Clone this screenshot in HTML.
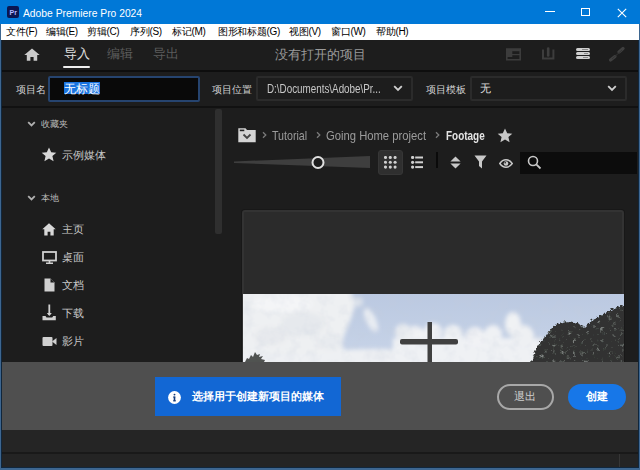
<!DOCTYPE html>
<html><head><meta charset="utf-8">
<style>
*{box-sizing:border-box;margin:0;padding:0}
html,body{width:640px;height:470px;overflow:hidden;background:#1d1d1d;font-family:"Liberation Sans",sans-serif}
.a{position:absolute}
.t{position:absolute;white-space:nowrap;line-height:1}
.sx{transform-origin:0 50%;transform:scaleX(0.82)}
.mn{font-size:10px;color:#000;top:27px;letter-spacing:-0.3px}
</style></head><body>

<!-- title bar -->
<div class="a" style="left:0;top:0;width:640px;height:24px;background:#0078d7"></div>
<div class="a" style="left:7px;top:6px;width:12px;height:12px;background:#0b1650;border-radius:2px"></div>
<div class="t" style="left:9.5px;top:8.5px;font-size:7px;color:#b4b8ff;font-weight:bold">Pr</div>
<div class="t" style="left:23px;top:8.5px;font-size:10.3px;color:#fff">Adobe Premiere Pro 2024</div>
<div class="a" style="left:545px;top:11px;width:10px;height:1px;background:#fff"></div>
<div class="a" style="left:581px;top:8px;width:8.5px;height:8px;border:1px solid #fff"></div>
<svg class="a" style="left:616.5px;top:7.5px" width="10" height="10" viewBox="0 0 10 10"><path d="M0.8 0.8L9.2 9.2M9.2 0.8L0.8 9.2" stroke="#fff" stroke-width="1.1"/></svg>

<!-- menu bar -->
<div class="a" style="left:1px;top:24px;width:638px;height:16px;background:#fff"></div>
<div class="t mn" style="left:6px">文件(F)</div>
<div class="t mn" style="left:46px">编辑(E)</div>
<div class="t mn" style="left:87px">剪辑(C)</div>
<div class="t mn" style="left:130px">序列(S)</div>
<div class="t mn" style="left:172px">标记(M)</div>
<div class="t mn" style="left:218px">图形和标题(G)</div>
<div class="t mn" style="left:289px">视图(V)</div>
<div class="t mn" style="left:331px">窗口(W)</div>
<div class="t mn" style="left:376px">帮助(H)</div>

<!-- header -->
<div class="a" style="left:1px;top:40px;width:638px;height:30px;background:#1d1d1d"></div>
<div class="a" style="left:1px;top:70px;width:638px;height:2px;background:#0e0e0e"></div>
<svg class="a" style="left:24px;top:47.5px" width="16" height="13" viewBox="0 0 16 13"><path d="M8 0.4L0.3 7H2.8V12.8H6.4V9H9.6V12.8H13.2V7H15.7Z" fill="#cacaca"/></svg>
<div class="t" style="left:64px;top:47px;font-size:13px;color:#e0e0e0">导入</div>
<div class="a" style="left:63px;top:66px;width:27px;height:2px;background:#eee;border-radius:1px"></div>
<div class="t" style="left:107px;top:47px;font-size:13px;color:#5c5c5c">编辑</div>
<div class="t" style="left:153px;top:47px;font-size:13px;color:#5c5c5c">导出</div>
<div class="t" style="left:275px;top:48.5px;font-size:12.5px;color:#9a9a9a">没有打开的项目</div>
<!-- header right icons -->
<svg class="a" style="left:506px;top:48px" width="16" height="13" viewBox="0 0 16 13" fill="#3c3c3c"><path d="M0.8 1H14.2V11.8H0.8Z" fill="none" stroke="#3c3c3c" stroke-width="1.6"/><rect x="0.8" y="1" width="13.4" height="2.2"/><rect x="0.8" y="1" width="5.5" height="8"/><rect x="6" y="6" width="8" height="1.2"/></svg>
<svg class="a" style="left:541px;top:47px" width="15" height="14" viewBox="0 0 15 14"><path d="M2 2.5V11.5H12.4V2.5" fill="none" stroke="#3d3d3d" stroke-width="2"/><path d="M7.2 1.5V8.5" stroke="#3f3f3f" stroke-width="2.6" stroke-linecap="round"/></svg>
<div class="a" style="left:576px;top:48px;width:14px;height:3px;background:#d0d0d0;border-radius:1.5px"></div><div class="a" style="left:582px;top:49px;width:6px;height:1px;background:#8a8a8a"></div>
<div class="a" style="left:576px;top:52px;width:14px;height:3px;background:#d0d0d0;border-radius:1.5px"></div><div class="a" style="left:584px;top:53px;width:4px;height:1px;background:#8a8a8a"></div>
<div class="a" style="left:576px;top:56px;width:14px;height:3px;background:#d0d0d0;border-radius:1.5px"></div><div class="a" style="left:583px;top:57px;width:5px;height:1px;background:#8a8a8a"></div>
<svg class="a" style="left:608px;top:46px" width="17" height="17" viewBox="0 0 17 17"><path d="M11 6L15 2.5" stroke="#3f3f3f" stroke-width="3.2" stroke-linecap="round"/><path d="M2.5 14L7 10.5" stroke="#3f3f3f" stroke-width="3.2" stroke-linecap="round"/><path d="M4 13L14 4" stroke="#333" stroke-width="1"/></svg>

<!-- project row -->
<div class="a" style="left:1px;top:72px;width:638px;height:34px;background:#1d1d1d"></div>
<div class="t" style="left:15.5px;top:84.5px;font-size:9.7px;color:#d4d4d4">项目名</div>
<div class="a" style="left:48px;top:76px;width:152px;height:26px;background:#090909;border:2.5px solid #26446f;border-radius:2px"></div>
<div class="a" style="left:64px;top:82px;width:36px;height:12px;background:#1a73e0"></div>
<div class="t" style="left:64px;top:82.5px;font-size:12px;color:#fff">无标题</div>
<div class="t" style="left:212px;top:84.5px;font-size:9.5px;color:#d4d4d4">项目位置</div>
<div class="a" style="left:256px;top:76px;width:157px;height:25px;background:#1d1d1d;border:2px solid #2b2b2b;border-radius:2px"></div>
<div class="t sx" style="left:267px;top:83px;font-size:12px;color:#c8c8c8">D:\Documents\Adobe\Pr...</div>
<svg class="a" style="left:393px;top:85px" width="10" height="7" viewBox="0 0 10 7"><path d="M1.2 1.2L5 5L8.8 1.2" fill="none" stroke="#d0d0d0" stroke-width="1.8"/></svg>
<div class="t" style="left:425.5px;top:84.5px;font-size:9.7px;color:#d4d4d4">项目模板</div>
<div class="a" style="left:470px;top:76px;width:157px;height:25px;background:#1d1d1d;border:2px solid #2b2b2b;border-radius:2px"></div>
<div class="t" style="left:480px;top:83px;font-size:11px;color:#dcdcdc">无</div>
<svg class="a" style="left:607px;top:85px" width="10" height="7" viewBox="0 0 10 7"><path d="M1.2 1.2L5 5L8.8 1.2" fill="none" stroke="#d0d0d0" stroke-width="1.8"/></svg>
<div class="a" style="left:1px;top:106px;width:638px;height:2px;background:#111"></div>

<!-- left panel -->
<svg class="a" style="left:27px;top:121px" width="9" height="6" viewBox="0 0 9 6"><path d="M1.2 1.2L4.5 4.5L7.8 1.2" fill="none" stroke="#b0b0b0" stroke-width="1.8"/></svg>
<div class="t" style="left:41px;top:119.5px;font-size:9px;color:#bdbdbd">收藏夹</div>
<svg class="a" style="left:41px;top:147px" width="16" height="15" viewBox="0 0 16 15"><path d="M8 0.5L10.2 5.3L15.3 5.7L11.4 9.1L12.6 14.2L8 11.5L3.4 14.2L4.6 9.1L0.7 5.7L5.8 5.3Z" fill="#d8d8d8"/></svg>
<div class="t" style="left:62px;top:149.5px;font-size:11.3px;color:#c8c8c8">示例媒体</div>
<svg class="a" style="left:27px;top:195px" width="9" height="6" viewBox="0 0 9 6"><path d="M1.2 1.2L4.5 4.5L7.8 1.2" fill="none" stroke="#b0b0b0" stroke-width="1.8"/></svg>
<div class="t" style="left:41px;top:193.5px;font-size:9px;color:#bdbdbd">本地</div>

<svg class="a" style="left:42px;top:223px" width="15" height="13" viewBox="0 0 15 13"><path d="M7 0.3L0.3 6.3H2.3V12.5H5.6V8.8H8.4V12.5H11.7V6.3H13.7Z" fill="#d8d8d8"/></svg>
<div class="t" style="left:62px;top:224px;font-size:11.3px;color:#c8c8c8">主页</div>
<svg class="a" style="left:42px;top:251px" width="15" height="13" viewBox="0 0 15 13"><rect x="1" y="1" width="13" height="8.5" fill="none" stroke="#d0d0d0" stroke-width="1.8"/><path d="M7.5 9.5V12.2M4 12.2H11" stroke="#d0d0d0" stroke-width="1.6"/></svg>
<div class="t" style="left:62px;top:252px;font-size:11.3px;color:#c8c8c8">桌面</div>
<svg class="a" style="left:44px;top:278px" width="11" height="14" viewBox="0 0 11 14"><path d="M0.5 0.5H6.5L10.5 4.5V13.5H0.5Z" fill="#d0d0d0"/><path d="M6.5 0.5V4.5H10.5" fill="#1d1d1d"/></svg>
<div class="t" style="left:62px;top:280px;font-size:11.3px;color:#c8c8c8">文档</div>
<svg class="a" style="left:42px;top:304px" width="15" height="17" viewBox="0 0 15 17"><path d="M7.3 0.5V11" stroke="#d0d0d0" stroke-width="1.8"/><path d="M4.8 9L7.3 12L9.8 9Z" fill="#d0d0d0"/><path d="M0.5 12H3.5L4.5 13.5H10.2L11.2 12H13.8V16.3H0.5Z" fill="#d0d0d0"/></svg>
<div class="t" style="left:62px;top:308px;font-size:11.3px;color:#c8c8c8">下载</div>
<svg class="a" style="left:42px;top:336px" width="15" height="11" viewBox="0 0 15 11"><rect x="0.5" y="1" width="10" height="9" rx="1" fill="#d0d0d0"/><path d="M10 5.5L14.5 2V9Z" fill="#d0d0d0"/></svg>
<div class="t" style="left:62px;top:336px;font-size:11.3px;color:#c8c8c8">影片</div>

<!-- scrollbar -->
<div class="a" style="left:215px;top:109px;width:7px;height:125px;background:#2f2f2f;border-radius:2px"></div>

<!-- breadcrumb -->
<svg class="a" style="left:238px;top:128px" width="18" height="15" viewBox="0 0 18 15"><path d="M0.3 0.3H7.5L9 2H17.7V14.3H0.3Z" fill="#d4d4d4"/><rect x="1.8" y="1.6" width="4.5" height="1.6" fill="#222"/><path d="M5.5 6.5L9 10L12.5 6.5" fill="none" stroke="#444" stroke-width="1.8"/></svg>
<svg class="a" style="left:262px;top:131px" width="5" height="8" viewBox="0 0 5 8"><path d="M1 1.2L3.8 4L1 6.8" fill="none" stroke="#7a7a7a" stroke-width="1.3"/></svg>
<div class="t sx" style="left:272px;top:129px;font-size:13px;color:#9c9c9c">Tutorial</div>
<svg class="a" style="left:316px;top:131px" width="5" height="8" viewBox="0 0 5 8"><path d="M1 1.2L3.8 4L1 6.8" fill="none" stroke="#7a7a7a" stroke-width="1.3"/></svg>
<div class="t sx" style="left:326px;top:129px;font-size:13px;color:#9c9c9c;transform:scaleX(0.865)">Going Home project</div>
<svg class="a" style="left:435px;top:131px" width="5" height="8" viewBox="0 0 5 8"><path d="M1 1.2L3.8 4L1 6.8" fill="none" stroke="#7a7a7a" stroke-width="1.3"/></svg>
<div class="t sx" style="left:445.5px;top:129px;font-size:13px;color:#e4e4e4;font-weight:bold;transform:scaleX(0.765)">Footage</div>
<svg class="a" style="left:497px;top:128px" width="16" height="15" viewBox="0 0 16 15"><path d="M8 0.5L10.2 5.3L15.3 5.7L11.4 9.1L12.6 14.2L8 11.5L3.4 14.2L4.6 9.1L0.7 5.7L5.8 5.3Z" fill="#c8c8c8"/></svg>

<!-- toolbar -->
<svg class="a" style="left:232px;top:154px" width="140" height="16" viewBox="0 0 140 16"><path d="M2 7.5L138 2V14L2 9Z" fill="#3e3e3e"/><circle cx="86" cy="8.5" r="5.5" fill="#1d1d1d" stroke="#e0e0e0" stroke-width="2"/></svg>
<div class="a" style="left:378px;top:150px;width:25px;height:25px;background:#2f2f2f;border:1px solid #363636;border-radius:3px"></div>
<svg class="a" style="left:384px;top:156.3px" width="14" height="14" viewBox="0 0 14 14" fill="#d0d0d0"><circle cx="1.5" cy="1.5" r="1.55"/><circle cx="6.3" cy="1.5" r="1.55"/><circle cx="11.1" cy="1.5" r="1.55"/><circle cx="1.5" cy="6.3" r="1.55"/><circle cx="6.3" cy="6.3" r="1.55"/><circle cx="11.1" cy="6.3" r="1.55"/><circle cx="1.5" cy="11.1" r="1.55"/><circle cx="6.3" cy="11.1" r="1.55"/><circle cx="11.1" cy="11.1" r="1.55"/></svg>
<svg class="a" style="left:411.3px;top:156.1px" width="13" height="13" viewBox="0 0 13 13" fill="#d0d0d0"><circle cx="1.6" cy="1.5" r="1.6"/><rect x="4.2" y="0.5" width="7.8" height="2"/><circle cx="1.6" cy="6.3" r="1.6"/><rect x="4.2" y="5.3" width="7.8" height="2"/><circle cx="1.6" cy="11.1" r="1.6"/><rect x="4.2" y="10.1" width="7.8" height="2"/></svg>
<div class="a" style="left:436px;top:152px;width:2px;height:16px;background:#0a0a0a"></div>
<svg class="a" style="left:449.5px;top:156px" width="11" height="13" viewBox="0 0 11 13" fill="#c8c8c8"><path d="M5.5 0.6L10.6 5.4H0.4Z"/><path d="M5.5 12.4L10.6 7.4H0.4Z"/></svg>
<svg class="a" style="left:474px;top:155px" width="13" height="14" viewBox="0 0 13 14" fill="#c8c8c8"><path d="M0.5 0.5H12.5L8 6.5V13.5L5 11V6.5Z"/></svg>
<svg class="a" style="left:499px;top:158.5px" width="14" height="9" viewBox="0 0 14 9"><path d="M0.8 4.5C3 1.3 5 0.8 7 0.8S11 1.3 13.2 4.5C11 7.7 9 8.2 7 8.2S3 7.7 0.8 4.5Z" fill="none" stroke="#c8c8c8" stroke-width="1.5"/><circle cx="7" cy="4.5" r="2.3" fill="#c8c8c8"/><circle cx="6.2" cy="3.8" r="0.8" fill="#1d1d1d"/></svg>
<div class="a" style="left:520px;top:152px;width:117px;height:22px;background:#0c0c0c"></div>
<svg class="a" style="left:527px;top:155px" width="15" height="15" viewBox="0 0 15 15"><circle cx="6" cy="6" r="4.5" fill="none" stroke="#c8c8c8" stroke-width="1.6"/><path d="M9.3 9.3L13.5 13.5" stroke="#c8c8c8" stroke-width="1.8"/></svg>

<!-- card -->
<div class="a" style="left:242px;top:210px;width:382px;height:170px;background:#2b2b2b;border:2px solid #333;border-radius:3px;box-shadow:0 0 0 1px #181818"></div>
<svg class="a" style="left:243px;top:294px" width="381" height="68" viewBox="0 0 381 68">
<defs>
<filter id="bl" x="-30%" y="-30%" width="160%" height="160%"><feGaussianBlur stdDeviation="2.2"/></filter>
<filter id="rough" x="-5%" y="-5%" width="110%" height="110%"><feTurbulence type="turbulence" baseFrequency="0.3" numOctaves="1" seed="7" result="n"/><feDisplacementMap in="SourceGraphic" in2="n" scale="4" xChannelSelector="R" yChannelSelector="G"/><feGaussianBlur stdDeviation="0.5"/></filter>
<filter id="mot" x="0" y="0" width="100%" height="100%"><feTurbulence type="fractalNoise" baseFrequency="0.09" numOctaves="3" seed="11"/><feColorMatrix values="0 0 0 0 0.55  0 0 0 0 0.6  0 0 0 0 0.7  0 0 0 -0.5 0.28"/></filter>
<filter id="bl2" x="-10%" y="-10%" width="120%" height="120%"><feGaussianBlur stdDeviation="0.6"/></filter>
<filter id="tex" x="0" y="0" width="100%" height="100%"><feTurbulence type="fractalNoise" baseFrequency="0.25" numOctaves="2" seed="5"/><feColorMatrix values="0 0 0 0 0.45  0 0 0 0 0.47  0 0 0 0 0.47  0 0 0 2.4 -1.45"/><feComposite in2="SourceGraphic" operator="in"/></filter>
<linearGradient id="sky" x1="0" y1="0" x2="0" y2="1"><stop offset="0" stop-color="#bbc9e1"/><stop offset="1" stop-color="#c8d4e8"/></linearGradient>
</defs>
<rect width="381" height="68" fill="url(#sky)"/>
<g filter="url(#bl)">
<path d="M-5 -5H106C112 3 113 10 110 18C108 26 104 34 101 42C99 50 98 54 104 58L-5 70Z" fill="#eef0f2"/>
<ellipse cx="60" cy="30" rx="22" ry="12" fill="#e6e9ed"/>
<ellipse cx="28" cy="42" rx="16" ry="9" fill="#e7e9ed"/>
<ellipse cx="88" cy="48" rx="12" ry="8" fill="#e8ebef"/>
<ellipse cx="40" cy="10" rx="30" ry="8" fill="#f4f5f7"/>
<ellipse cx="128" cy="26" rx="5" ry="13" transform="rotate(-25 128 26)" fill="#e8ecf2"/>
<ellipse cx="115" cy="8" rx="5" ry="5" fill="#dde3ec"/>
<rect x="-5" y="58" width="300" height="14" fill="#eef0f3"/><ellipse cx="130" cy="62" rx="60" ry="7" fill="#eef0f3"/>
<circle cx="172" cy="42" r="10" fill="#f2f3f5"/><circle cx="190" cy="38" r="9" fill="#f2f3f5"/><circle cx="210" cy="41" r="10" fill="#f0f2f4"/>
<rect x="150" y="44" width="150" height="30" fill="#eff1f4"/>
<circle cx="232" cy="43" r="10" fill="#f1f2f5"/><circle cx="250" cy="40" r="9" fill="#eff1f4"/>
<ellipse cx="270" cy="30" rx="8" ry="12" fill="#f0f2f4"/><circle cx="280" cy="42" r="11" fill="#eef0f3"/>

<ellipse cx="160" cy="38" rx="8" ry="8" fill="#e9ecf0"/>
</g>
<rect x="0" y="0" width="381" height="68" filter="url(#mot)" opacity="1"/>
<g filter="url(#rough)"><path d="M287 68C289 58 294 48 300 42C305 34 310 29 318 27C326 25 334 28 340 32C346 26 352 22 360 18C368 14 374 11 382 9V68Z" fill="#303330"/>
<path d="M287 68C289 58 294 48 300 42C305 34 310 29 318 27C326 25 334 28 340 32C346 26 352 22 360 18C368 14 374 11 382 9V68Z" fill="#000" filter="url(#tex)"/></g>
<g fill="#404040" filter="url(#bl2)">
<rect x="184.5" y="28" width="4.5" height="40"/>
<rect x="157" y="45" width="58" height="5.5" rx="2"/>
</g>
<path d="M2 68L4 64L6 65L8 61L10 63L12 58L14 61L17 60L16 63L20 62L18 65L22 66L21 68Z" fill="#353735" opacity="0.85" filter="url(#bl2)"/>
</svg>

<!-- bottom bar -->
<div class="a" style="left:1px;top:362px;width:638px;height:68px;background:#4f4f4f"></div>
<div class="a" style="left:155px;top:377px;width:186px;height:39px;background:#1267d4"></div>
<svg class="a" style="left:168px;top:390.5px" width="13" height="13" viewBox="0 0 13 13"><circle cx="6.5" cy="6.5" r="6.4" fill="#fff"/><rect x="5.7" y="5.6" width="1.6" height="4.6" fill="#123a7a"/><rect x="5" y="9.4" width="3" height="0.9" fill="#123a7a"/><rect x="5" y="5.6" width="2.3" height="0.9" fill="#123a7a"/><circle cx="6.5" cy="3.6" r="0.95" fill="#123a7a"/></svg>
<div class="t" style="left:192px;top:391px;font-size:11px;color:#fff;font-weight:bold">选择用于创建新项目的媒体</div>
<div class="a" style="left:497px;top:384px;width:57px;height:26px;border:2px solid #a8a8a8;border-radius:13px"></div>
<div class="t" style="left:513.5px;top:391px;font-size:11px;color:#cfcfcf">退出</div>
<div class="a" style="left:568px;top:384px;width:58px;height:26px;background:#1777e8;border-radius:13px"></div>
<div class="t" style="left:586px;top:391px;font-size:11px;color:#fff;font-weight:bold">创建</div>
<div class="a" style="left:1px;top:430px;width:638px;height:22px;background:#252525"></div>
<div class="a" style="left:1px;top:452px;width:638px;height:2px;background:#191919"></div>
<div class="a" style="left:1px;top:454px;width:638px;height:14px;background:#242424"></div>
<div class="a" style="left:619px;top:454px;width:1px;height:13px;background:#363636"></div>

<!-- borders -->
<div class="a" style="left:1px;top:40px;width:1px;height:428px;background:#10263c"></div>
<div class="a" style="left:638px;top:40px;width:1px;height:428px;background:#10263c"></div>
<div class="a" style="left:0;top:24px;width:1px;height:446px;background:#3d6690"></div>
<div class="a" style="left:639px;top:24px;width:1px;height:446px;background:#3d6690"></div>
<div class="a" style="left:1px;top:467px;width:638px;height:1px;background:#10263c"></div>
<div class="a" style="left:0;top:468px;width:640px;height:2px;background:#3d6690"></div>
</body></html>
